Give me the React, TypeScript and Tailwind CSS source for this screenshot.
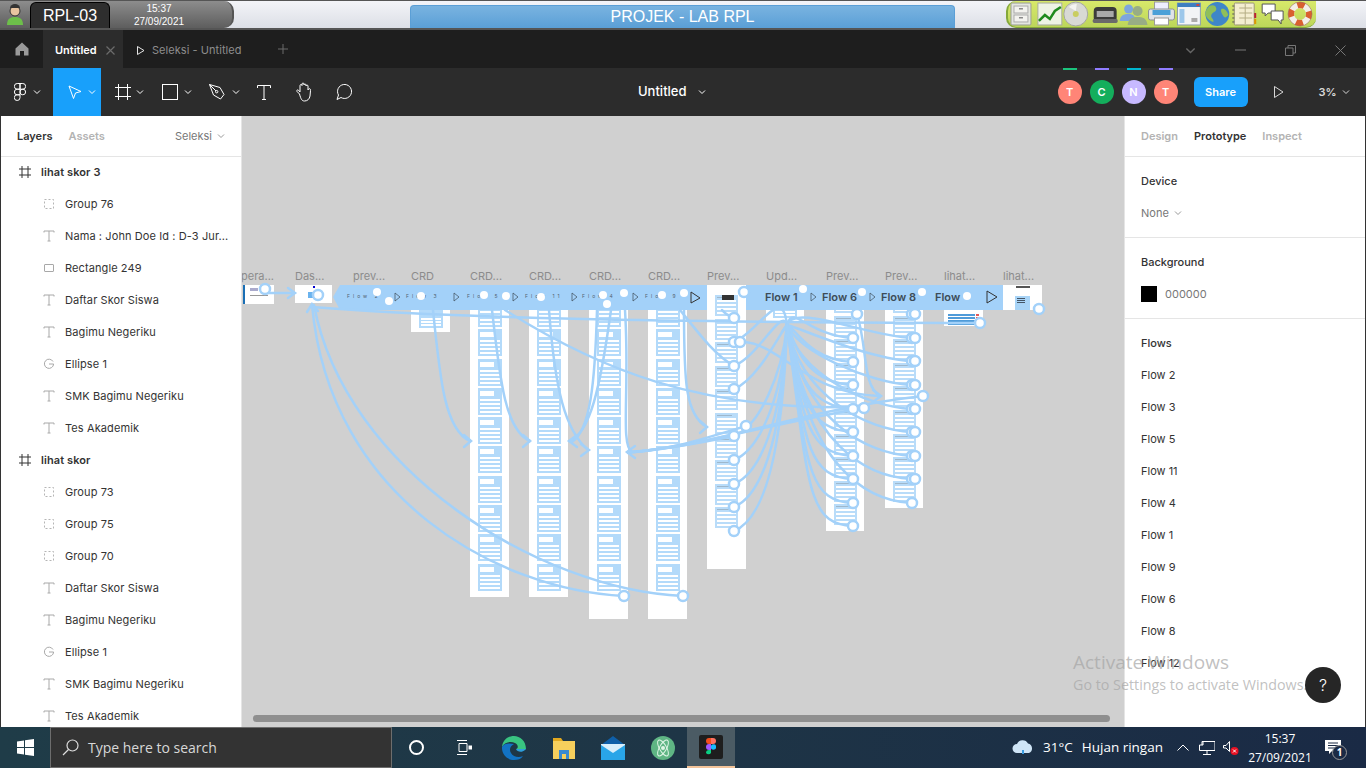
import React from 'react'

const layers = [
  { name: 'lihat skor 3', kind: 'frame' },
  { name: 'Group 76', kind: 'group' },
  { name: 'Nama : John Doe Id : D-3 Jur...', kind: 'text' },
  { name: 'Rectangle 249', kind: 'rect' },
  { name: 'Daftar Skor Siswa', kind: 'text' },
  { name: 'Bagimu Negeriku', kind: 'text' },
  { name: 'Ellipse 1', kind: 'ellipse' },
  { name: 'SMK Bagimu Negeriku', kind: 'text' },
  { name: 'Tes Akademik', kind: 'text' },
  { name: 'lihat skor', kind: 'frame' },
  { name: 'Group 73', kind: 'group' },
  { name: 'Group 75', kind: 'group' },
  { name: 'Group 70', kind: 'group' },
  { name: 'Daftar Skor Siswa', kind: 'text' },
  { name: 'Bagimu Negeriku', kind: 'text' },
  { name: 'Ellipse 1', kind: 'ellipse' },
  { name: 'SMK Bagimu Negeriku', kind: 'text' },
  { name: 'Tes Akademik', kind: 'text' },
]

const flows = ['Flow 2', 'Flow 3', 'Flow 5', 'Flow 11', 'Flow 4', 'Flow 1', 'Flow 9', 'Flow 6', 'Flow 8', 'Flow 12']

const BLUE = '#a3d1f9'

const Chevron = ({ className = 'text-white', size = 8 }: { className?: string; size?: number }) => (
  <svg width={size} height={size} viewBox="0 0 8 8" fill="none" stroke="currentColor" className={className}>
    <path d="M1 2.5 4 5.5 7 2.5" />
  </svg>
)

const LayerIcon = ({ kind }: { kind: string }) => {
  if (kind === 'frame')
    return (
      <svg width="12" height="12" viewBox="0 0 12 12" fill="none" stroke="#333" strokeWidth="1">
        <path d="M3 0v12M9 0v12M0 3h12M0 9h12" />
      </svg>
    )
  if (kind === 'group')
    return (
      <svg width="12" height="12" viewBox="0 0 12 12" fill="none" stroke="#b5b5b5" strokeWidth="1" strokeDasharray="2 2">
        <rect x="1.5" y="1.5" width="9" height="9" />
      </svg>
    )
  if (kind === 'text')
    return (
      <svg width="12" height="12" viewBox="0 0 12 12" fill="none" stroke="#a8a8a8" strokeWidth="1">
        <path d="M1 2.5V1h10v1.5M6 1v10M4.5 11h3" />
      </svg>
    )
  if (kind === 'rect')
    return (
      <svg width="12" height="12" viewBox="0 0 12 12" fill="none" stroke="#a8a8a8" strokeWidth="1">
        <rect x="1.5" y="2.5" width="9" height="7" rx="0.5" />
      </svg>
    )
  return (
    <svg width="12" height="12" viewBox="0 0 12 12" fill="none" stroke="#a8a8a8" strokeWidth="1">
      <path d="M10 3.5A4.6 4.6 0 1 0 10.6 6H6" />
    </svg>
  )
}

const TrayIcons = () => (
  <svg width="308" height="26" viewBox="0 0 308 26">
    {/* cabinet */}
    <rect x="2" y="2" width="20" height="22" rx="1" fill="#e4e6e0" stroke="#9a9d96" />
    <rect x="5" y="5" width="14" height="7" fill="#f3f3ef" stroke="#aaa" />
    <rect x="5" y="14" width="14" height="7" fill="#f3f3ef" stroke="#aaa" />
    <rect x="10" y="7" width="4" height="1.5" fill="#888" />
    <rect x="10" y="16" width="4" height="1.5" fill="#888" />
    {/* chart */}
    <rect x="29" y="2" width="24" height="22" fill="#eef3e4" stroke="#a8ac9f" />
    <path d="M30 20 36 14 41 18 46 10 52 6" fill="none" stroke="#1f8a1d" strokeWidth="2.5" />
    {/* disc */}
    <circle cx="67" cy="13" r="12" fill="#d8d9d5" stroke="#a5a7a0" />
    <circle cx="67" cy="13" r="3" fill="#c9cd60" />
    <path d="M60 6a10 10 0 0 1 8-3l-1 7z" fill="#f4f4f2" />
    {/* typewriter */}
    <rect x="85" y="6" width="23" height="15" rx="4" fill="#3b3b3b" />
    <rect x="88" y="10" width="17" height="6" fill="#a9a9a9" />
    <rect x="84" y="18" width="25" height="4" rx="1.5" fill="#6a6a6a" />
    {/* users */}
    <g transform="translate(-3 0)">
      <circle cx="123" cy="8" r="4.5" fill="#7ea6dc" />
      <path d="M114 20c1-6 4-7 9-7s6 2 7 7z" fill="#7ea6dc" />
      <circle cx="132" cy="10" r="5" fill="#98ad85" />
      <path d="M122 24c1-7 5-8 10-8s9 1 10 8z" fill="#98ad85" />
    </g>
    {/* printer */}
    <g transform="translate(-10 0)">
      <rect x="156" y="1" width="14" height="8" fill="#eef" stroke="#999" />
      <rect x="150" y="8" width="26" height="11" rx="2" fill="#dfe3e8" stroke="#8b9097" />
      <rect x="154" y="9" width="18" height="5" fill="#4aa0d8" />
      <rect x="156" y="17" width="14" height="7" fill="#fff" stroke="#999" />
    </g>
    <g transform="translate(-9 0)">
      {/* window */}
      <rect x="178" y="2" width="23" height="22" fill="#f2f4f6" stroke="#8c9db0" />
      <rect x="178" y="2" width="23" height="4" fill="#3d7ec0" />
      <rect x="197" y="3" width="3" height="2" fill="#c44" />
      <rect x="180" y="8" width="5" height="14" fill="#9cc7ea" />
      <rect x="192" y="17" width="6" height="4" fill="#aaa" />
      {/* globe */}
      <circle cx="218" cy="13" r="12" fill="#3f86c9" />
      <path d="M210 5c4-2 7 0 7 3s-4 3-5 6 3 4 2 7c-4-1-7-4-8-8 0-3 2-6 4-8zM222 8c3-1 6 2 7 6-2 3-4 3-5 1s-3-4-2-7z" fill="#8fbf5a" />
      {/* notebook */}
      <rect x="235" y="2" width="20" height="22" rx="1" fill="#f4eed0" stroke="#9a9575" />
      <path d="M240 7h13M240 12h13M240 17h13M246 3v20" stroke="#b5ae85" />
      <path d="M235 5h-2M235 9h-2M235 13h-2M235 17h-2M235 21h-2" stroke="#555" />
      <rect x="255" y="12" width="2" height="5" fill="#b23" />
      <rect x="255" y="18" width="2" height="5" fill="#d90" />
      {/* chat */}
      <path d="M263 3h13v9h-7l-3 3v-3h-3z" fill="#fff" stroke="#555" />
      <path d="M272 10h12v9h-2v4l-3-4h-7z" fill="#fff" stroke="#555" />
    </g>
    {/* lifebuoy */}
    <circle cx="292" cy="13" r="9" fill="none" stroke="#f3efe8" strokeWidth="6" />
    <circle cx="292" cy="13" r="9" fill="none" stroke="#d9602f" strokeWidth="6" strokeDasharray="7.07 7.07" strokeDashoffset="3" />
    <circle cx="292" cy="13" r="12" fill="none" stroke="#9a6a50" strokeWidth="0.6" />
  </svg>
)

const TopBar = () => (
  <div className="flex h-[30px] shrink-0 items-stretch border-t border-b-2 border-[#555] bg-gradient-to-b from-[#f3f4f8] to-[#dcdfe6] font-['Liberation_Sans',sans-serif]">
    <div className="flex w-[234px] items-center rounded-r-[10px] border-r-2 border-[#555] bg-gradient-to-b from-[#8d8d8d] to-[#5e5e5e]">
      <svg width="20" height="22" viewBox="0 0 20 22" className="ml-[5px]">
        <circle cx="10" cy="7" r="5" fill="#e8c4a0" stroke="#333" />
        <path d="M5 4a5 4 0 0 1 10 0z" fill="#333" />
        <path d="M2 21c0-6 3-8 8-8s8 2 8 8z" fill="#6dbf4a" />
      </svg>
      <div className="ml-[5px] flex h-[26px] w-[80px] items-center justify-center self-end rounded-t-[6px] border border-b-0 border-black bg-[#2e2e2e] text-[16px] text-white">
        RPL-03
      </div>
      <div className="ml-[1px] flex w-[96px] flex-col items-center text-[10px] leading-[13px] text-white">
        <span>15:37</span>
        <span>27/09/2021</span>
      </div>
    </div>
    <div className="ml-[176px] flex h-[23px] w-[545px] items-center justify-center self-end rounded-t-[4px] border border-b-0 border-[#5b9fd6] bg-gradient-to-b from-[#79b3e0] to-[#5a9fd6] text-[16px] text-white">
      PROJEK - LAB RPL
    </div>
    <div className="ml-[51px] flex w-[310px] items-center overflow-hidden rounded-l-[10px] rounded-br-[10px] border-b border-l-2 border-[#84a83a] bg-gradient-to-b from-[#d8e96a] to-[#bcd65a] pl-[1px]">
      <TrayIcons />
    </div>
  </div>
)

const TabBar = () => (
  <div className="flex h-[38px] shrink-0 items-stretch bg-[#1e1e1e] font-[Inter,sans-serif] text-[11px]">
    <div className="flex w-[43px] items-center justify-center">
      <svg width="14" height="14" viewBox="0 0 14 14" fill="#9a9a9a">
        <path d="M7 .5 13.5 6.5V13.5H9V9H5V13.5H.5V6.5z" />
      </svg>
    </div>
    <div className="flex w-[80px] items-center bg-[#2c2c2c] pt-[2px] pl-[12px] font-semibold text-white">
      Untitled
      <svg width="9" height="9" viewBox="0 0 9 9" stroke="#6b6b6b" strokeWidth="1.2" className="ml-[9px]">
        <path d="M.5.5l8 8M8.5.5l-8 8" />
      </svg>
    </div>
    <div className="flex w-[140px] items-center pt-[2px] pl-[14px] tracking-[0.05px] text-[#8d8d8d]">
      <svg width="8" height="9" viewBox="0 0 8 9" fill="none" stroke="#e5e5e5" className="mr-[7px]">
        <path d="M.5.5 7 4.5.5 8.5z" />
      </svg>
      Seleksi - Untitled
    </div>
    <div className="flex items-center pl-[15px]">
      <svg width="10" height="10" viewBox="0 0 10 10" stroke="#6b6b6b">
        <path d="M5 0v10M0 5h10" />
      </svg>
    </div>
    <div className="ml-auto flex items-center pt-[2px]">
      <span className="flex w-[50px] justify-center">
        <Chevron className="text-[#666]" size={11} />
      </span>
      <span className="flex w-[50px] justify-center">
        <svg width="11" height="2" viewBox="0 0 11 2" stroke="#777">
          <path d="M0 1h11" />
        </svg>
      </span>
      <span className="flex w-[50px] justify-center">
        <svg width="11" height="11" viewBox="0 0 11 11" fill="none" stroke="#777">
          <path d="M.5 3h7.5v7.5H.5zM3 3V.5h7.5V8H8" />
        </svg>
      </span>
      <span className="flex w-[51px] justify-center">
        <svg width="11" height="11" viewBox="0 0 11 11" stroke="#777">
          <path d="M.5.5l10 10M10.5.5l-10 10" />
        </svg>
      </span>
    </div>
  </div>
)

const Avatar = ({ letter, bg, bar }: { letter: string; bg: string; bar: string }) => (
  <div className="relative flex h-[48px] w-[32px] items-center justify-center">
    <span className={`absolute top-0 left-[9px] h-[2px] w-[14px] ${bar}`} />
    <span className={`flex h-[24px] w-[24px] items-center justify-center rounded-full text-[11px] font-semibold text-white ${bg}`}>
      {letter}
    </span>
  </div>
)

const Toolbar = () => (
  <div className="flex h-[48px] shrink-0 items-center bg-[#2c2c2c] font-[Inter,sans-serif] text-white">
    <div className="flex w-[53px] items-center pl-[14px]">
      <svg width="12" height="18" viewBox="0 0 12 18" fill="none" stroke="#fff">
        <path d="M6 .5H3.2a2.8 2.8 0 0 0 0 5.7H6zM6 .5h2.8a2.8 2.8 0 0 1 0 5.7H6zM6 6.2H3.2a2.8 2.8 0 0 0 0 5.6H6zM11.6 9a2.8 2.8 0 1 1-5.6 0 2.8 2.8 0 0 1 5.6 0zM6 11.8H3.2A2.85 2.85 0 1 0 6 14.6z" />
      </svg>
      <Chevron className="ml-[7px]" />
    </div>
    <div className="flex h-[48px] w-[48px] items-center bg-[#18a0fb] pl-[15px]">
      <svg width="14" height="15" viewBox="0 0 14 15" fill="none" stroke="#fff">
        <path d="M1 1 13 6.5 7.5 8 5.5 13.5z" />
      </svg>
      <Chevron className="ml-[6px]" />
    </div>
    <div className="ml-[14px] flex w-[47px] items-center">
      <svg width="16" height="16" viewBox="0 0 16 16" stroke="#fff" fill="none">
        <path d="M3.5 0v16M12.5 0v16M0 3.5h16M0 12.5h16" />
      </svg>
      <Chevron className="ml-[5px]" />
    </div>
    <div className="flex w-[47px] items-center">
      <span className="h-[16px] w-[16px] border border-white" />
      <Chevron className="ml-[6px]" />
    </div>
    <div className="flex w-[49px] items-center">
      <svg width="16" height="16" viewBox="0 0 16 16" fill="none" stroke="#fff">
        <path d="M.5.5 11 3.5l4 7-3.500 4.500-7-4zM.5.5 7 7" />
        <circle cx="7.7" cy="7.7" r="1.2" />
      </svg>
      <Chevron className="ml-[7px]" />
    </div>
    <svg width="14" height="15" viewBox="0 0 14 15" fill="none" stroke="#fff" className="ml-[-1px]">
      <path d="M.5 3V.5h13V3M7 .5v14M5 14.5h4" />
    </svg>
    <svg width="18" height="20" viewBox="0 0 18 20" fill="none" stroke="#fff" className="ml-[25px]">
      <path d="M3.5 12 1 9.5c-.8-1 .5-2.2 1.5-1.2L4 10V3.5c0-1.300 2-1.300 2 0V2c0-1.300 2-1.300 2 0v1c0-1.300 2-1.300 2 0v1c0-1.300 2-1.300 2 0v4c1-2 3-1.500 2.500.5L14 14c-.5 3-2.500 5-5.500 5-2.500 0-3.500-1.500-5-7z" />
    </svg>
    <svg width="18" height="18" viewBox="0 0 18 18" fill="none" stroke="#fff" className="ml-[21px]">
      <path d="M2 16.5 3.5 12A7 7 0 1 1 6 14.5z" />
    </svg>
    <div className="ml-[285px] flex items-center text-[13px] font-medium">
      Untitled
      <Chevron className="ml-[11px]" />
    </div>
    <div className="ml-[348px] flex items-center">
      <Avatar letter="T" bg="bg-[#ff8577]" bar="bg-[#1bc47d]" />
      <Avatar letter="C" bg="bg-[#14ae5c]" bar="bg-[#907cff]" />
      <Avatar letter="N" bg="bg-[#c7b9ff]" bar="bg-[#00b5ce]" />
      <Avatar letter="T" bg="bg-[#ff8577]" bar="bg-[#907cff]" />
    </div>
    <button className="ml-[12px] h-[30px] w-[54px] rounded-[6px] bg-[#18a0fb] text-[11px] font-semibold text-white">Share</button>
    <svg width="10" height="12" viewBox="0 0 10 12" fill="none" stroke="#d8d8d8" className="ml-[26px]">
      <path d="M.5.5 9 6 .5 11.5z" />
    </svg>
    <span className="ml-[35px] text-[11px] font-semibold text-[#d8d8d8]">3%</span>
    <Chevron className="ml-[5px] text-[#d8d8d8]" />
  </div>
)

const LayersPanel = () => (
  <div className="flex w-[242px] shrink-0 flex-col overflow-hidden border-r border-l border-r-[#e5e5e5] border-l-[#333] bg-white font-[Inter,sans-serif] text-[11px] text-[#333]">
    <div className="flex h-[41px] shrink-0 items-center border-b border-[#e5e5e5] pr-[16px] pl-[16px]">
      <span className="font-semibold">Layers</span>
      <span className="ml-[16px] font-semibold text-[#b3b3b3]">Assets</span>
      <span className="ml-auto text-[#777]">Seleksi</span>
      <Chevron className="ml-[5px] text-[#999]" />
    </div>
    {layers.map((l, i) => (
      <div key={i} className={`flex h-[32px] shrink-0 items-center pb-[2px] tracking-[0.1px] ${l.kind === 'frame' ? 'pl-[18px] font-semibold' : 'pl-[42px]'}`}>
        <LayerIcon kind={l.kind} />
        <span className="ml-[10px] whitespace-nowrap">{l.name}</span>
      </div>
    ))}
  </div>
)

type Frame = { label: string; x: number; w: number; h: number; kind: 'plain' | 'crd' | 'prev' }

const frames: Frame[] = [
  { label: 'pera...', x: 243, w: 31, h: 19, kind: 'plain' },
  { label: 'Das...', x: 295, w: 37, h: 18, kind: 'plain' },
  { label: 'prev...', x: 353, w: 38, h: 20, kind: 'plain' },
  { label: 'CRD', x: 411, w: 39, h: 47, kind: 'plain' },
  { label: 'CRD...', x: 470, w: 39, h: 312, kind: 'crd' },
  { label: 'CRD...', x: 529, w: 39, h: 312, kind: 'crd' },
  { label: 'CRD...', x: 589, w: 39, h: 334, kind: 'crd' },
  { label: 'CRD...', x: 648, w: 39, h: 334, kind: 'crd' },
  { label: 'Prev...', x: 707, w: 39, h: 284, kind: 'prev' },
  { label: 'Upd...', x: 766, w: 38, h: 37, kind: 'plain' },
  { label: 'Prev...', x: 826, w: 38, h: 246, kind: 'prev' },
  { label: 'Prev...', x: 885, w: 38, h: 223, kind: 'prev' },
  { label: 'lihat...', x: 944, w: 39, h: 41, kind: 'plain' },
  { label: 'lihat...', x: 1003, w: 39, h: 25, kind: 'plain' },
]

// cards inside the long frames
const CrdCard = () => (
  <div className="flex h-[27px] w-[24px] shrink-0 flex-col gap-[2px] bg-[#b3dafa] px-[2px] pt-[3px]">
    <span className="mb-[1px] h-[5px] w-[14px] bg-white" />
    <span className="h-[2px] bg-white" />
    <span className="h-[2px] bg-white" />
    <span className="h-[2px] bg-white" />
    <span className="h-[2px] bg-white" />
  </div>
)

const PrevCard = () => (
  <div className="flex h-[21px] w-[23px] shrink-0 flex-col gap-[2px] bg-[#b9dcf9] px-[2px] pt-[2px]">
    <span className="h-[1px] w-[15px] bg-[#9fb8cc]" />
    <span className="h-[2px] bg-white" />
    <span className="h-[2px] bg-white" />
    <span className="h-[2px] bg-white" />
    <span className="h-[2px] bg-white" />
  </div>
)

const FrameBody = ({ f }: { f: Frame }) => {
  if (f.kind === 'crd')
    return (
      <div className="flex flex-col items-center gap-[2.3px] pt-[15px]">
        {Array.from({ length: 10 }).map((_, i) => (
          <CrdCard key={i} />
        ))}
      </div>
    )
  if (f.kind === 'prev') {
    const count = f.x === 885 ? 9 : 10
    return (
      <div className={`flex flex-col items-center gap-[2.6px] ${f.x === 707 ? 'pt-[10px]' : 'pt-[7px]'}`}>
        {Array.from({ length: count }).map((_, i) => (
          <PrevCard key={i} />
        ))}
        {f.x === 707 && <span className="absolute top-[10px] left-[15px] h-[5px] w-[12px] bg-[#333]" />}
      </div>
    )
  }
  if (f.x === 411 || f.x === 766)
    return (
      <div className="flex h-full items-end justify-center pb-[4px]">
        <div className="flex h-[18px] w-[24px] flex-col justify-end gap-[1px] bg-[#b3dafa] px-[2px] pb-[2px]">
          <span className="h-[2px] bg-white" />
          <span className="h-[2px] bg-white" />
          <span className="h-[2px] bg-white" />
        </div>
      </div>
    )
  if (f.x === 944)
    return (
      <div className="flex h-full flex-col justify-end gap-[1px] px-[4px] pb-[1px]">
        {Array.from({ length: 4 }).map((_, i) => (
          <div key={i} className="flex h-[2px] gap-[1px]">
            <span className="grow bg-[#4f9bd9]" />
            <span className="w-[3px] bg-[#e25a5a]" />
          </div>
        ))}
      </div>
    )
  if (f.x === 1003)
    return (
      <div className="flex h-full flex-col items-center pt-[1px]">
        <span className="h-[2px] w-[14px] bg-[#555]" />
        <div className="mt-[8px] flex h-[14px] w-[15px] flex-col gap-[1px] bg-[#a8d4f7] p-[2px]">
          <span className="h-[1px] w-[8px] bg-[#456]" />
          <span className="h-[1px] w-[8px] bg-[#456]" />
          <span className="h-[1px] w-[8px] bg-[#456]" />
        </div>
      </div>
    )
  if (f.x === 243)
    return (
      <div className="flex h-full">
        <span className="h-full w-[2px] bg-[#1a6fb5]" />
        <div className="mt-[3px] ml-[5px] flex flex-col gap-[4px]">
          <span className="h-[3px] w-[8px] bg-[#aac]" />
          <span className="h-[1px] w-[18px] bg-[#999]" />
        </div>
      </div>
    )
  if (f.x === 295)
    return (
      <div className="flex h-full flex-col items-center pt-[1px]">
        <span className="h-[2px] w-[2px] bg-[#00c]" />
        <span className="mt-[4px] ml-[-6px] h-[6px] w-[6px] bg-[#6bb3ee]" />
      </div>
    )
  return null
}

// flow chip labels in the band, the small ones are barely legible at 3% zoom
const chips = [
  { x: 347, t: 'Flow 2', big: false },
  { x: 406, t: 'Flow 3', big: false },
  { x: 467, t: 'Flow 5', big: false },
  { x: 525, t: 'Flow 11', big: false },
  { x: 582, t: 'Flow 4', big: false },
  { x: 645, t: 'Flow 9', big: false },
  { x: 765, t: 'Flow 1', big: true },
  { x: 822, t: 'Flow 6', big: true },
  { x: 881, t: 'Flow 8', big: true },
  { x: 935, t: 'Flow', big: true },
]

const smallPlays = [395, 454, 513, 572, 633, 811, 870]

const hollow: [number, number][] = [
  [265, 289], [318, 295], [744, 292], [734, 318], [734, 342], [740, 342], [734, 366], [734, 389], [746, 426], [734, 436],
  [734, 460], [734, 484], [734, 507], [734, 531], [857, 314], [853, 338], [853, 362], [853, 385], [853, 409], [864, 408],
  [853, 432], [853, 456], [853, 479], [853, 503], [853, 526], [912, 314], [915, 314], [912, 338], [915, 338], [912, 361],
  [915, 361], [912, 385], [915, 385], [923, 396], [912, 409], [915, 409], [912, 432], [915, 432], [912, 456], [915, 456],
  [912, 479], [915, 479], [912, 503], [624, 596], [683, 596], [980, 323], [1039, 309],
]

const solid: [number, number][] = [
  [377, 292], [389, 301], [421, 296], [484, 295], [506, 296], [541, 297], [603, 295], [624, 293], [607, 304], [662, 295],
  [684, 293], [803, 289], [862, 292], [922, 292], [967, 296],
]

const fanTargets: [number, number][] = [
  [734, 342], [734, 366], [734, 389], [734, 436], [734, 460], [734, 484], [734, 507], [734, 531],
  [853, 338], [853, 362], [853, 385], [853, 409], [853, 432], [853, 456], [853, 479], [853, 503], [853, 526],
  [912, 338], [912, 361], [912, 385], [912, 409], [912, 432], [912, 456], [912, 479], [912, 503],
]

const fanPath = ([x, y]: [number, number]) => {
  if (x < 787) return `M787 325C782 ${y - 60} ${x + 25} ${y - 10} ${x} ${y}`
  return `M787 325C${792 + (y - 325) / 12} ${y - 35} ${x - 45} ${y - 2} ${x} ${y}`
}

const arrowPaths = [
  'M265 293H294',
  'M288 288L295 293 288 298',
  'M624 596C500 590 330 500 312 305',
  'M683 596C540 590 345 470 314 305',
  'M307 312L312 304 318 311',
  'M312 307C450 318 650 322 980 323',
  'M433 310C440 380 445 430 470 441',
  'M464 435L471 441 464 447',
  'M492 310C500 380 505 430 530 441',
  'M523 435L530 441 523 447',
  'M549 310C555 390 565 430 588 450',
  'M581 444L589 450 581 456',
  'M611 310C600 390 590 432 570 441',
  'M577 435L569 441 577 447',
  'M625 310C630 390 620 445 632 452',
  'M505 310C600 370 700 410 853 407',
  'M684 310C684 380 685 415 707 427',
  'M700 421L707 427 700 433',
  'M680 310C700 335 715 355 734 366',
  'M722 310C726 315 730 316 734 318',
  'M745 342C780 345 810 395 880 396',
  'M873 390L881 396 873 402',
  'M857 314C868 350 862 385 880 396',
  'M746 426C700 440 670 450 628 452',
  'M864 408C790 420 700 445 628 453',
  'M923 396C800 410 720 445 634 452',
  'M635 446L627 452 635 458',
  'M734 436C690 445 660 450 630 452',
  'M782 332L787 325 792 332',
  'M597 310C595 385 590 430 572 442',
]

const Canvas = () => (
  <div className="relative grow overflow-hidden bg-[#d0d0d0] font-[Inter,sans-serif]">
    {frames.map((f, i) => (
      <React.Fragment key={i}>
        <span
          className="absolute text-[11px] whitespace-nowrap text-[#8c8c8c]"
          style={{ left: f.x === 243 ? -1 : f.x - 242, top: 152 }}
        >
          {f.label}
        </span>
        {f.x === 707 ? null : (
          <div className="absolute overflow-hidden bg-white" style={{ left: f.x - 242, top: 169, width: f.w, height: f.h }}>
            <FrameBody f={f} />
          </div>
        )}
      </React.Fragment>
    ))}
    {/* the flow chips sit on the frames, but the Prev frame sits on them */}
    <div className="absolute top-[169px] left-[98px] h-[25px] w-[367px] bg-[#a3d1f9]" />
    <div className="absolute top-[169px] left-[504px] h-[25px] w-[257px] bg-[#a3d1f9]" />
    <div className="absolute overflow-hidden bg-white" style={{ left: 707 - 242, top: 169, width: 39, height: 284 }}>
      <FrameBody f={frames[8]} />
    </div>
    {chips.map((c) => (
      <span
        key={c.x}
        className={`absolute whitespace-nowrap ${c.big ? 'top-[173px] text-[11px] font-semibold text-[#3d4c58]' : 'top-[177px] text-[5px] tracking-[3px] text-[#52626f]'}`}
        style={{ left: c.x - 242 }}
      >
        {c.t}
      </span>
    ))}
    <svg width="882" height="611" viewBox="242 116 882 611" fill="none" className="absolute inset-0">
      <path d="M340 285 333 297 340 310z" fill={BLUE} />
      {smallPlays.map((x) => (
        <path key={x} d={`M${x} 293v8l5-4z`} stroke="#3d4c58" strokeWidth="0.7" />
      ))}
      <path d="M691 292v11l9-5z" stroke="#333" />
      <path d="M987 291v12l10-6z" stroke="#333" />
      <g stroke={BLUE} strokeWidth="2.5" strokeLinecap="round">
        {arrowPaths.map((d) => (
          <path key={d} d={d} />
        ))}
        {fanTargets.map((t) => (
          <path key={t.join()} d={fanPath(t)} />
        ))}
      </g>
      {hollow.map(([x, y]) => (
        <circle key={`${x}-${y}`} cx={x} cy={y} r="5" fill="#fff" stroke={BLUE} strokeWidth="2.5" />
      ))}
      {solid.map(([x, y]) => (
        <circle key={`${x}-${y}`} cx={x} cy={y} r="4" fill="#fff" />
      ))}
    </svg>
    <div className="absolute top-[599px] left-[11px] h-[7px] w-[857px] rounded-full bg-[#8f8f8f]" />
  </div>
)

const RightPanel = () => (
  <div className="flex w-[242px] shrink-0 flex-col overflow-hidden border-r border-l border-r-[#333] border-l-[#e5e5e5] bg-white font-[Inter,sans-serif] text-[11px] text-[#333]">
    <div className="flex h-[41px] shrink-0 items-center gap-[16px] border-b border-[#e5e5e5] pl-[16px] font-semibold">
      <span className="text-[#b3b3b3]">Design</span>
      <span>Prototype</span>
      <span className="text-[#b3b3b3]">Inspect</span>
    </div>
    <div className="flex h-[81px] shrink-0 flex-col border-b border-[#e5e5e5] pl-[16px]">
      <span className="mt-[17px] leading-[14px] font-medium">Device</span>
      <div className="mt-[17px] flex items-center text-[#777]">
        None
        <Chevron className="ml-[5px] text-[#999]" />
      </div>
    </div>
    <div className="flex h-[81px] shrink-0 flex-col border-b border-[#e5e5e5] pl-[16px]">
      <span className="mt-[17px] leading-[14px] font-medium">Background</span>
      <div className="mt-[17px] flex items-center text-[#777]">
        <span className="h-[16px] w-[16px] bg-black" />
        <span className="ml-[8px]">000000</span>
      </div>
    </div>
    <div className="flex flex-col pl-[16px]">
      <span className="mt-[17px] mb-[9px] leading-[14px] font-medium">Flows</span>
      {flows.map((f) => (
        <span key={f} className="flex h-[32px] shrink-0 items-center">
          {f}
        </span>
      ))}
    </div>
  </div>
)

const Taskbar = () => (
  <div className="flex h-[41px] shrink-0 items-center bg-gradient-to-r from-[#1f3c48] via-[#1e3546] to-[#1a2a45] font-['Open_Sans',sans-serif] text-white">
    <div className="flex w-[50px] items-center justify-center">
      <svg width="17" height="17" viewBox="0 0 17 17" fill="#fff">
        <path d="M0 2.4 7 1.400V8H0zM8 1.300 17 0V8H8zM0 9H7V15.600L0 14.600zM8 9H17V17L8 15.700z" />
      </svg>
    </div>
    <div className="flex h-[41px] w-[342px] items-center border border-[#6d6d6d] bg-[#333] pl-[11px] text-[14px] text-[#d8d8d8]">
      <svg width="17" height="17" viewBox="0 0 17 17" fill="none" stroke="#ddd" strokeWidth="1.2">
        <circle cx="10.5" cy="6.5" r="5.5" />
        <path d="M6.5 10.5 1 16" />
      </svg>
      <span className="ml-[9px]">Type here to search</span>
    </div>
    <div className="flex w-[48px] justify-center">
      <span className="h-[15px] w-[15px] rounded-full border-[2.5px] border-white" />
    </div>
    <div className="flex w-[47px] justify-center">
      <svg width="16" height="16" viewBox="0 0 16 16" fill="none" stroke="#fff">
        <path d="M1 .5h10M3 3.5h8v8H3zM1 14.5h10" />
        <rect x="13" y="6" width="3" height="3" fill="#fff" />
      </svg>
    </div>
    <div className="flex w-[54px] justify-center">
      <svg width="24" height="24" viewBox="0 0 24 24">
        <path d="M12 0C5 0 .5 5 0 11 3 6 9 5 13 7c4 2 3 6 1 6h10C24 5 18 0 12 0z" fill="#39c481" />
        <path d="M0 11c-.5 7 5 13 12 13 4 0 7-1 9-4-4 2-10 1-12-3-2-3-1-7 3-9C7 7 2 7 0 11z" fill="#1273c4" />
        <path d="M14 13c1 3 6 4 9 1 .5-.3 1-1 1-1z" fill="#2e9fdc" />
      </svg>
    </div>
    <div className="flex w-[46px] justify-center">
      <svg width="22" height="22" viewBox="0 0 22 22">
        <path d="M0 1h8l2 3h12v4H0z" fill="#e2a81f" />
        <rect y="4" width="22" height="18" fill="#f7cf5c" />
        <rect x="6" y="13" width="10" height="9" fill="#3a8ad0" />
        <rect x="9" y="17" width="4" height="5" fill="#f7cf5c" />
      </svg>
    </div>
    <div className="flex w-[52px] justify-center">
      <svg width="24" height="24" viewBox="0 0 24 24">
        <path d="M0 9 12 0l12 9-12 8z" fill="#0f5fa8" />
        <rect y="9" width="24" height="15" fill="#29a5e8" />
        <path d="M0 9 12 17 24 9v-1H0z" fill="#d8eefb" />
      </svg>
    </div>
    <div className="flex w-[48px] justify-center">
      <svg width="24" height="24" viewBox="0 0 24 24" fill="none">
        <circle cx="12" cy="12" r="12" fill="#5fb584" />
        <ellipse cx="12" cy="12" rx="9" ry="3.5" stroke="#dff5e6" transform="rotate(60 12 12)" />
        <ellipse cx="12" cy="12" rx="9" ry="3.5" stroke="#dff5e6" transform="rotate(120 12 12)" />
        <circle cx="12" cy="12" r="2" fill="#dff5e6" />
      </svg>
    </div>
    <div className="flex h-[41px] w-[48px] items-center justify-center border-b-2 border-[#f4c49a] bg-[#4b5b64]">
      <div className="flex h-[24px] w-[24px] items-center justify-center rounded-[2px] bg-[#1e1e1e]">
        <svg width="10" height="18" viewBox="0 0 10 18">
          <path d="M0 3a3 3 0 0 1 3-3h2v6H3a3 3 0 0 1-3-3z" fill="#f24e1e" />
          <path d="M5 0h2a3 3 0 0 1 0 6H5z" fill="#ff7262" />
          <path d="M0 9a3 3 0 0 1 3-3h2v6H3a3 3 0 0 1-3-3z" fill="#a259ff" />
          <circle cx="7.5" cy="9" r="2.7" fill="#1abcfe" />
          <path d="M0 15a3 3 0 0 1 3-3h2v3a3 3 0 0 1-5 0z" fill="#0acf83" />
        </svg>
      </div>
    </div>
    <svg width="22" height="15" viewBox="0 0 22 15" className="ml-[277px]">
      <path d="M5 13a4.5 4.5 0 0 1 0-9 6 6 0 0 1 11-.5A5 5 0 0 1 17 13z" fill="#cfe5f7" />
      <path d="M11 10v4" stroke="#3a9be0" strokeWidth="2" />
    </svg>
    <span className="ml-[9px] text-[13.5px] leading-none">31°C</span>
    <span className="ml-[9px] text-[13.5px] leading-none">Hujan ringan</span>
    <svg width="12" height="7" viewBox="0 0 12 7" fill="none" stroke="#fff" className="ml-[14px]">
      <path d="M.5 6.5 6 1l5.500 5.500" />
    </svg>
    <svg width="16" height="14" viewBox="0 0 16 14" fill="none" stroke="#fff" className="ml-[10px]">
      <path d="M3 4V.5h13v9H.5V4H4V1M8 9.5v3.500M4 13.5h8" />
    </svg>
    <svg width="16" height="14" viewBox="0 0 16 14" className="ml-[8px]">
      <path d="M.5 4.5h2.500L6.500.5v10L3 7H.5z" fill="none" stroke="#fff" />
      <circle cx="11.5" cy="10" r="4" fill="#e81123" />
      <path d="M10 8.500l3 3M13 8.500l-3 3" stroke="#fff" />
    </svg>
    <div className="ml-[5px] flex w-[72px] flex-col items-center text-[12px] leading-[19px]">
      <span>15:37</span>
      <span>27/09/2021</span>
    </div>
    <div className="relative ml-[9px]">
      <svg width="16" height="15" viewBox="0 0 16 15" fill="#fff">
        <path d="M0 0h16v11H7l-3 3v-3H0z" />
        <path d="M3 3h10M3 5.5h10M3 8h7" stroke="#1a2a45" />
      </svg>
      <span className="absolute top-[5px] left-[7px] flex h-[15px] w-[15px] items-center justify-center rounded-full border border-[#999] bg-[#1a2a45] text-[10px] font-bold">
        1
      </span>
    </div>
  </div>
)

export default function App() {
  return (
    <div className="relative flex h-[768px] w-[1366px] flex-col overflow-hidden">
      <TopBar />
      <TabBar />
      <Toolbar />
      <div className="flex h-[611px] shrink-0">
        <LayersPanel />
        <Canvas />
        <RightPanel />
      </div>
      <Taskbar />
      {/* windows watermark and help button float over the page */}
      <div className="pointer-events-none absolute top-[650px] left-[1073px] font-['Open_Sans',sans-serif] text-[#a5a5a5]/70">
        <p className="text-[19px] leading-[24px] whitespace-nowrap">Activate Windows</p>
        <p className="text-[14.3px] leading-[22px] whitespace-nowrap">Go to Settings to activate Windows.</p>
      </div>
      <div className="absolute top-[667px] left-[1305px] flex h-[36px] w-[36px] items-center justify-center rounded-full bg-[#262626] font-[Inter,sans-serif] text-[16px] font-light text-white">
        ?
      </div>
    </div>
  )
}
